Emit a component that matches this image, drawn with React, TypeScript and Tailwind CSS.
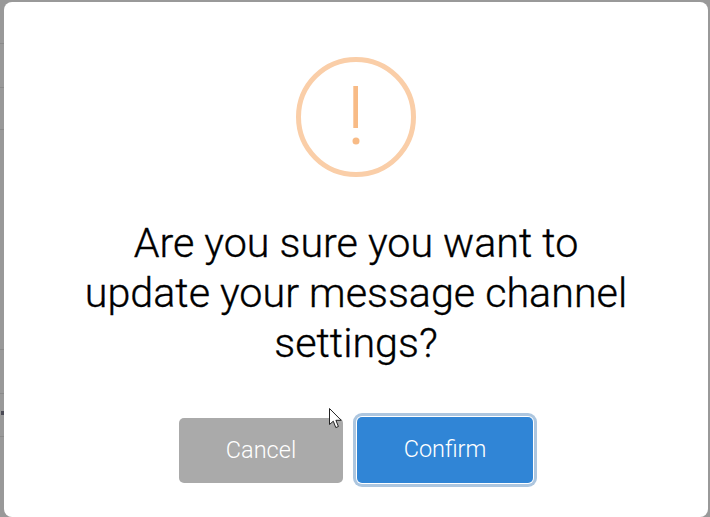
const ROWS = [42, 44, 42, 220, 44, 43, 80];

function BackdropStrip() {
  return (
    <div className="flex w-1 shrink-0 flex-col">
      {ROWS.map((height, i) => (
        <div
          key={i}
          className="relative w-full border-b border-[#8a8a8a] last:border-b-0"
          style={{ height }}
        >
          {i === 5 && <span className="absolute top-[17px] right-0 h-[4px] w-[3px] bg-[#4a4a55]" />}
        </div>
      ))}
    </div>
  );
}

function WarningIcon() {
  return (
    <svg width="120" height="120" viewBox="0 0 120 120" className="block">
      <circle cx="60" cy="60" r="57.5" fill="none" stroke="#facea8" strokeWidth="5" />
      <rect x="57.3" y="29" width="4.7" height="42" fill="#f8bb86" />
      <circle cx="60" cy="84" r="3.5" fill="#f8bb86" />
    </svg>
  );
}

function Pointer() {
  return (
    <svg width="14" height="21" viewBox="0 0 14 21" className="absolute left-[329px] top-[408px]">
      <path d="M.5.5V16.5L4.3 13.2 6.8 19.6 9.4 18.5 6.9 12.3H12.2Z" fill="#fff" stroke="#222" strokeWidth="1" />
    </svg>
  );
}

export default function App() {
  return (
    <div className="relative flex h-[517px] w-[710px] overflow-hidden bg-[#999999] pt-[2px] pr-[2px] font-['Roboto',sans-serif]">
      <BackdropStrip />
      <div className="flex h-[515px] flex-1 flex-col items-center rounded-[8px] bg-white">
        <div className="mt-[55px]">
          <WarningIcon />
        </div>
        <h2 className="mt-[41px] w-[560px] text-center text-[41.25px] leading-[50px] font-light text-black [-webkit-text-stroke:0.35px_#000]">
          Are you sure you want to update your message channel settings?
        </h2>
        <div className="mt-[50px] flex items-start gap-[14px]">
          <button
            type="button"
            className="h-[65px] w-[164px] rounded-[5px] bg-[#aaaaaa] text-[23.5px] font-light text-white"
          >
            Cancel
          </button>
          <button
            type="button"
            className="-mt-px h-[66px] w-[176px] rounded-[5px] bg-[#3085d6] text-[23.5px] font-light text-white shadow-[0_0_0_1px_#ffffff,0_0_0_4px_#adc6df]"
          >
            Confirm
          </button>
        </div>
      </div>
      <Pointer />
    </div>
  );
}
